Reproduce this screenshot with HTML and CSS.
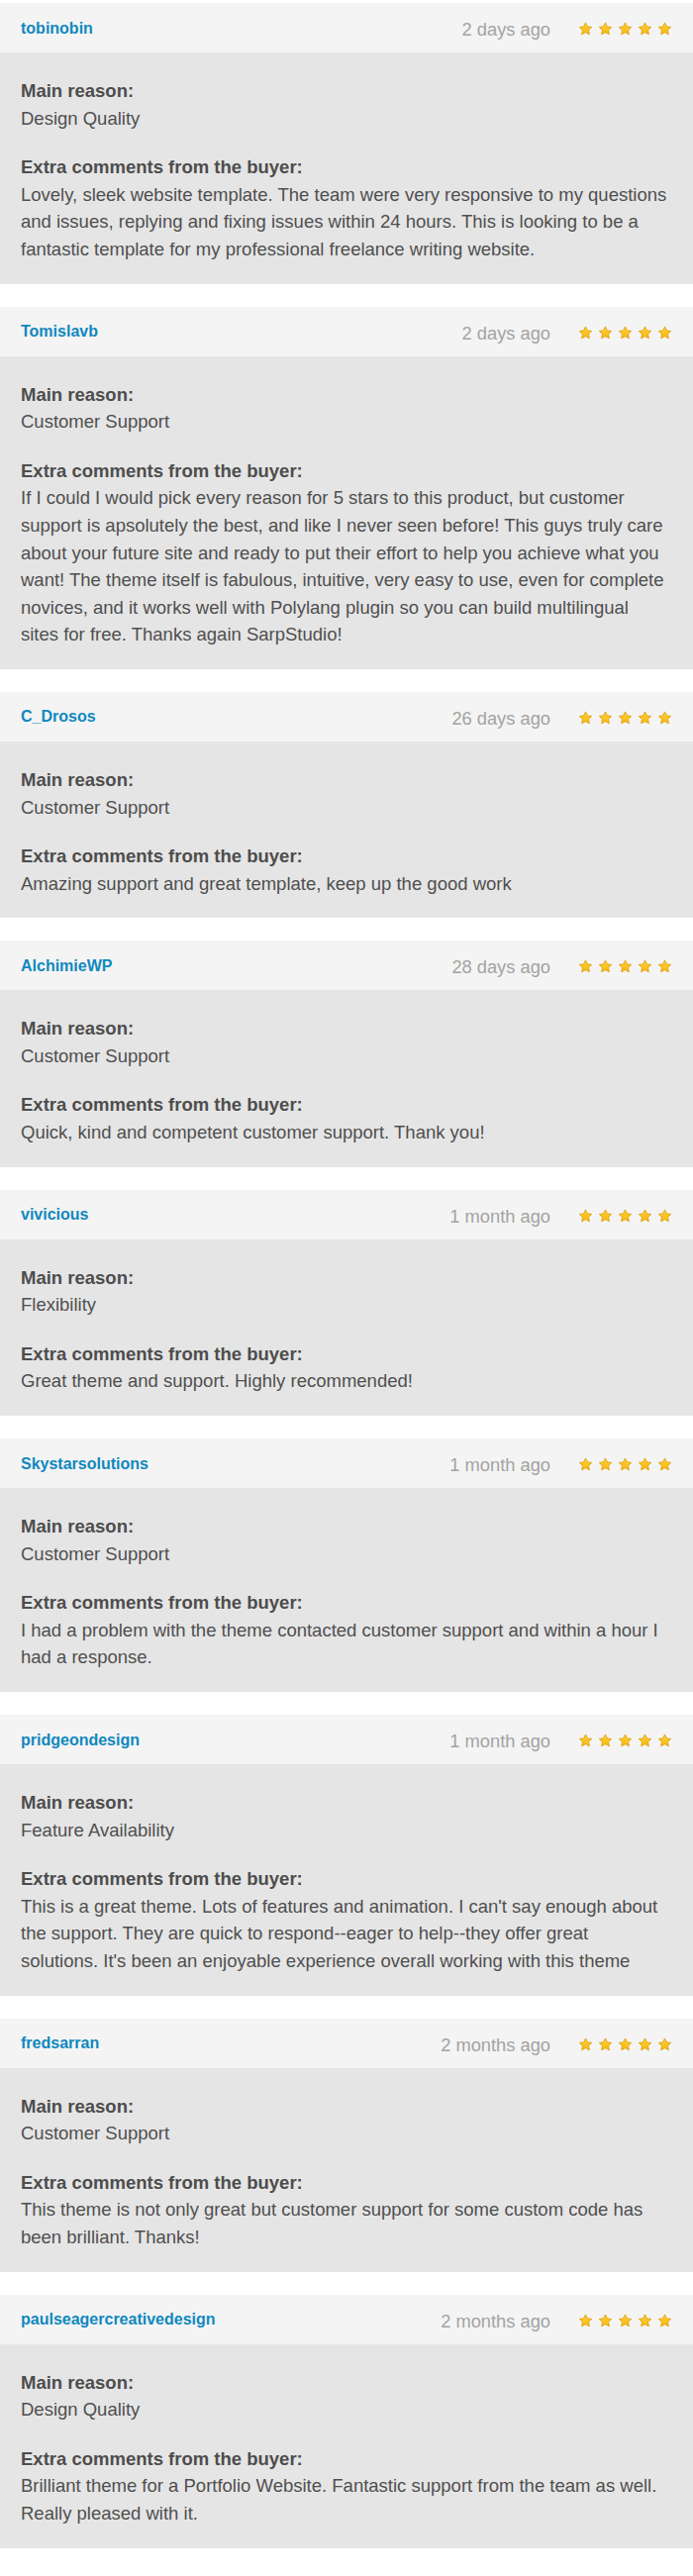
FILE: index.html
```html
<!DOCTYPE html>
<html lang="en">
<head>
<meta charset="utf-8">
<title>Reviews</title>
<link rel="stylesheet" href="styles.css">
</head>
<body>
<svg class="defs" width="0" height="0" aria-hidden="true">
  <defs>
    <linearGradient id="starfill" x1="0" y1="0" x2="0" y2="1">
      <stop offset="0" stop-color="#ffd23a"/>
      <stop offset="1" stop-color="#f9b80c"/>
    </linearGradient>
    <symbol id="star" viewBox="0 0 16 15">
      <path d="M8 1 L10 5.25 L14.66 5.84 L11.23 9.05 L12.11 13.66 L8 11.4 L3.89 13.66 L4.77 9.05 L1.34 5.84 L6 5.25 Z" fill="url(#starfill)" stroke="#e0a20e" stroke-width="1" stroke-linejoin="round"/>
    </symbol>
  </defs>
</svg>

<main class="reviews">

  <article class="review">
    <header class="review-head">
      <a class="user">tobinobin</a>
      <span class="date">2 days ago</span>
      <span class="stars"><svg class="star"><use href="#star"/></svg><svg class="star"><use href="#star"/></svg><svg class="star"><use href="#star"/></svg><svg class="star"><use href="#star"/></svg><svg class="star"><use href="#star"/></svg></span>
    </header>
    <div class="review-body">
      <p class="field"><strong class="label">Main reason:</strong><span class="value">Design Quality</span></p>
      <p class="field"><strong class="label">Extra comments from the buyer:</strong><span class="value">Lovely, sleek website template. The team were very responsive to my questions and issues, replying and fixing issues within 24 hours. This is looking to be a fantastic template for my professional freelance writing website.</span></p>
    </div>
  </article>

  <article class="review">
    <header class="review-head">
      <a class="user">Tomislavb</a>
      <span class="date">2 days ago</span>
      <span class="stars"><svg class="star"><use href="#star"/></svg><svg class="star"><use href="#star"/></svg><svg class="star"><use href="#star"/></svg><svg class="star"><use href="#star"/></svg><svg class="star"><use href="#star"/></svg></span>
    </header>
    <div class="review-body">
      <p class="field"><strong class="label">Main reason:</strong><span class="value">Customer Support</span></p>
      <p class="field"><strong class="label">Extra comments from the buyer:</strong><span class="value">If I could I would pick every reason for 5 stars to this product, but customer support is apsolutely the best, and like I never seen before! This guys truly care about your future site and ready to put their effort to help you achieve what you want! The theme itself is fabulous, intuitive, very easy to use, even for complete novices, and it works well with Polylang plugin so you can build multilingual sites for free. Thanks again SarpStudio!</span></p>
    </div>
  </article>

  <article class="review">
    <header class="review-head">
      <a class="user">C_Drosos</a>
      <span class="date">26 days ago</span>
      <span class="stars"><svg class="star"><use href="#star"/></svg><svg class="star"><use href="#star"/></svg><svg class="star"><use href="#star"/></svg><svg class="star"><use href="#star"/></svg><svg class="star"><use href="#star"/></svg></span>
    </header>
    <div class="review-body">
      <p class="field"><strong class="label">Main reason:</strong><span class="value">Customer Support</span></p>
      <p class="field"><strong class="label">Extra comments from the buyer:</strong><span class="value">Amazing support and great template, keep up the good work</span></p>
    </div>
  </article>

  <article class="review">
    <header class="review-head">
      <a class="user">AlchimieWP</a>
      <span class="date">28 days ago</span>
      <span class="stars"><svg class="star"><use href="#star"/></svg><svg class="star"><use href="#star"/></svg><svg class="star"><use href="#star"/></svg><svg class="star"><use href="#star"/></svg><svg class="star"><use href="#star"/></svg></span>
    </header>
    <div class="review-body">
      <p class="field"><strong class="label">Main reason:</strong><span class="value">Customer Support</span></p>
      <p class="field"><strong class="label">Extra comments from the buyer:</strong><span class="value">Quick, kind and competent customer support. Thank you!</span></p>
    </div>
  </article>

  <article class="review">
    <header class="review-head">
      <a class="user">vivicious</a>
      <span class="date">1 month ago</span>
      <span class="stars"><svg class="star"><use href="#star"/></svg><svg class="star"><use href="#star"/></svg><svg class="star"><use href="#star"/></svg><svg class="star"><use href="#star"/></svg><svg class="star"><use href="#star"/></svg></span>
    </header>
    <div class="review-body">
      <p class="field"><strong class="label">Main reason:</strong><span class="value">Flexibility</span></p>
      <p class="field"><strong class="label">Extra comments from the buyer:</strong><span class="value">Great theme and support. Highly recommended!</span></p>
    </div>
  </article>

  <article class="review">
    <header class="review-head">
      <a class="user">Skystarsolutions</a>
      <span class="date">1 month ago</span>
      <span class="stars"><svg class="star"><use href="#star"/></svg><svg class="star"><use href="#star"/></svg><svg class="star"><use href="#star"/></svg><svg class="star"><use href="#star"/></svg><svg class="star"><use href="#star"/></svg></span>
    </header>
    <div class="review-body">
      <p class="field"><strong class="label">Main reason:</strong><span class="value">Customer Support</span></p>
      <p class="field"><strong class="label">Extra comments from the buyer:</strong><span class="value">I had a problem with the theme contacted customer support and within a hour I had a response.</span></p>
    </div>
  </article>

  <article class="review">
    <header class="review-head">
      <a class="user">pridgeondesign</a>
      <span class="date">1 month ago</span>
      <span class="stars"><svg class="star"><use href="#star"/></svg><svg class="star"><use href="#star"/></svg><svg class="star"><use href="#star"/></svg><svg class="star"><use href="#star"/></svg><svg class="star"><use href="#star"/></svg></span>
    </header>
    <div class="review-body">
      <p class="field"><strong class="label">Main reason:</strong><span class="value">Feature Availability</span></p>
      <p class="field"><strong class="label">Extra comments from the buyer:</strong><span class="value">This is a great theme. Lots of features and animation. I can't say enough about the support. They are quick to respond--eager to help--they offer great solutions. It's been an enjoyable experience overall working with this theme</span></p>
    </div>
  </article>

  <article class="review">
    <header class="review-head">
      <a class="user">fredsarran</a>
      <span class="date">2 months ago</span>
      <span class="stars"><svg class="star"><use href="#star"/></svg><svg class="star"><use href="#star"/></svg><svg class="star"><use href="#star"/></svg><svg class="star"><use href="#star"/></svg><svg class="star"><use href="#star"/></svg></span>
    </header>
    <div class="review-body">
      <p class="field"><strong class="label">Main reason:</strong><span class="value">Customer Support</span></p>
      <p class="field"><strong class="label">Extra comments from the buyer:</strong><span class="value">This theme is not only great but customer support for some custom code has been brilliant. Thanks!</span></p>
    </div>
  </article>

  <article class="review">
    <header class="review-head">
      <a class="user">paulseagercreativedesign</a>
      <span class="date">2 months ago</span>
      <span class="stars"><svg class="star"><use href="#star"/></svg><svg class="star"><use href="#star"/></svg><svg class="star"><use href="#star"/></svg><svg class="star"><use href="#star"/></svg><svg class="star"><use href="#star"/></svg></span>
    </header>
    <div class="review-body">
      <p class="field"><strong class="label">Main reason:</strong><span class="value">Design Quality</span></p>
      <p class="field"><strong class="label">Extra comments from the buyer:</strong><span class="value">Brilliant theme for a Portfolio Website. Fantastic support from the team as well. Really pleased with it.</span></p>
    </div>
  </article>

</main>
</body>
</html>
```
FILE: styles.css
```css
html, body {
  margin: 0;
  padding: 0;
  background: #ffffff;
}

body {
  font-family: "Liberation Sans", Arial, Helvetica, sans-serif;
  color: #505050;
}

.defs {
  position: absolute;
  width: 0;
  height: 0;
  overflow: hidden;
}

.reviews {
  display: flex;
  flex-direction: column;
  gap: 23px;
  padding: 3px 0 22px;
}

.review-head {
  display: flex;
  align-items: center;
  height: 50px;
  padding: 0 21px;
  background: #f4f4f4;
}

.user {
  flex: 1;
  font-size: 16px;
  font-weight: bold;
  color: #0f88bf;
  text-decoration: none;
  padding-top: 1px;
}

.date {
  font-size: 18.3px;
  color: #a3a3a3;
  margin-right: 28px;
  padding-top: 4px;
}

.stars {
  display: flex;
  gap: 5px;
  margin-top: 2px;
}

.star {
  width: 15px;
  height: 14px;
  display: block;
}

.review-body {
  background: #e5e5e5;
  padding: 25px 26px 21px 21px;
  display: flex;
  flex-direction: column;
  gap: 22px;
}

.field {
  margin: 0;
  font-size: 18.5px;
  line-height: 27.6px;
  color: #4f4f4f;
}

.label {
  display: block;
  font-weight: bold;
  color: #4d4d4d;
}

.value {
  display: block;
}
```
